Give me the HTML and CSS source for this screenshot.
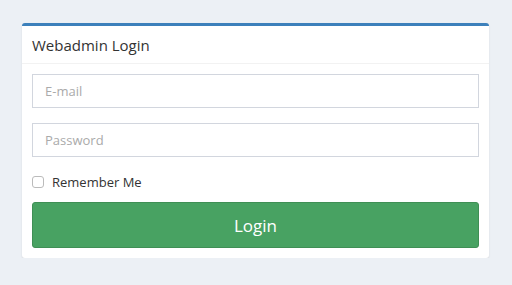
FILE: index.html
```html
<!DOCTYPE html>
<html>

<head>
  <title>Webadmin Login</title>
  <link rel="stylesheet" href="styles.css">
</head>

<body>
  <div class="login-box">
    <div class="box-header">Webadmin Login</div>
    <form class="box-body">
      <input type="text" class="form-input" placeholder="E-mail">
      <input type="password" class="form-input" placeholder="Password">
      <label class="remember">
        <span class="check"></span>
        Remember Me
      </label>
      <button type="submit" class="login-btn">Login</button>
    </form>
  </div>
</body>

</html>
```

FILE: styles.css
```css
body {
  margin: 0;
  background-color: #ecf0f5;
  font-family: "Open Sans", "Noto Sans", sans-serif;
  color: #333;
}

.login-box {
  margin: 23px 0 0 22px;
  width: 467px;
  background-color: #fff;
  border-top: 3px solid #3c80bb;
  border-radius: 3px;
  box-shadow: 0 1px 2px rgba(0, 0, 0, 0.1);
}

.box-header {
  height: 37px;
  padding: 0 10px;
  display: flex;
  align-items: center;
  font-size: 15px;
  border-bottom: 1px solid #f2f2f2;
}

.box-body {
  padding: 10px;
  display: flex;
  flex-direction: column;
}

.form-input {
  box-sizing: border-box;
  height: 34px;
  margin: 0 0 15px 0;
  padding: 0 12px;
  border: 1px solid #d2d6de;
  font-family: inherit;
  font-size: 13px;
  color: #555;
  outline: none;
}

.form-input::placeholder {
  color: #aaa;
}

.remember {
  display: flex;
  align-items: center;
  gap: 8px;
  height: 14px;
  margin: 3px 0 13px 0;
  font-size: 13px;
}

.check {
  box-sizing: border-box;
  width: 12px;
  height: 12px;
  border: 1px solid #bbb;
  border-radius: 3px;
}

.login-btn {
  height: 46px;
  border: 1px solid #3f8f55;
  border-radius: 3px;
  background-color: #48a262;
  color: #fff;
  font-family: inherit;
  font-size: 17px;
}
```
